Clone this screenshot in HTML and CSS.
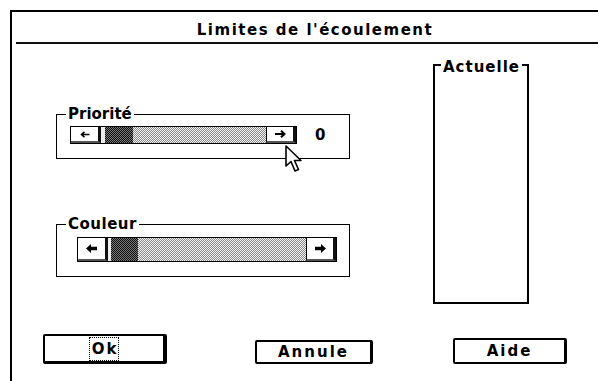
FILE: index.html
```html
<!DOCTYPE html>
<html lang="fr">

<head>
    <meta charset="UTF-8">
    <meta name="viewport" content="width=device-width, initial-scale=1.0">
    <title>Limites de l'écoulement</title>
    <link rel="stylesheet" href="styles.css">
</head>

<body>
    <div class="dialog">
        <div class="title">Limites de l'écoulement</div>

        <div class="main">
            <div class="left-col">
                <!-- Priorité -->
                <fieldset class="group group-prio">
                    <legend>Priorité</legend>
                    <div class="row">
                        <div class="scrollbar bar-small">
                            <span class="arrow-btn">
                                <svg width="10" height="7" viewBox="0 0 10 7">
                                    <path d="M1.5 3.5 H9.5 M4.5 0.8 L1.5 3.5 L4.5 6.2" fill="none" stroke="#000" stroke-width="1.6"/>
                                </svg>
                            </span>
                            <span class="thumb"></span>
                            <span class="track"></span>
                            <span class="arrow-btn arrow-right">
                                <svg width="11" height="8" viewBox="0 0 11 8">
                                    <path d="M0 4 H9.5 M6 0.8 L9.5 4 L6 7.2" fill="none" stroke="#000" stroke-width="2"/>
                                </svg>
                            </span>
                        </div>
                        <span class="value">0</span>
                    </div>
                    <svg class="cursor" width="20" height="28" viewBox="0 0 20 28">
                        <path d="M1 1 L1 21 L6 16.5 L10 26 L13.5 24.5 L9.5 15.5 L16 15.5 Z" fill="#fff" stroke="#000" stroke-width="1.6" stroke-linejoin="round"/>
                    </svg>
                </fieldset>

                <!-- Couleur -->
                <fieldset class="group group-coul">
                    <legend>Couleur</legend>
                    <div class="row">
                        <div class="scrollbar bar-large">
                            <span class="arrow-btn">
                                <svg width="11" height="9" viewBox="0 0 11 9">
                                    <polygon points="0,4.5 5,0 5,2.8 11,2.8 11,6.2 5,6.2 5,9" fill="#000"/>
                                </svg>
                            </span>
                            <span class="thumb"></span>
                            <span class="track"></span>
                            <span class="arrow-btn arrow-right">
                                <svg width="11" height="9" viewBox="0 0 11 9">
                                    <polygon points="11,4.5 6,0 6,2.8 0,2.8 0,6.2 6,6.2 6,9" fill="#000"/>
                                </svg>
                            </span>
                        </div>
                    </div>
                </fieldset>
            </div>

            <fieldset class="actuelle">
                <legend>Actuelle</legend>
            </fieldset>
        </div>

        <div class="buttons">
            <button class="btn btn-ok" type="button"><span class="focus">Ok</span></button>
            <button class="btn btn-annule" type="button">Annule</button>
            <button class="btn btn-aide" type="button">Aide</button>
        </div>
    </div>
</body>

</html>
```

FILE: styles.css
```css
body {
    margin: 0;
    background-color: #fff;
    font-family: 'DejaVu Sans', sans-serif;
    color: #000;
    overflow: hidden;
}

.dialog {
    margin: 10px 0 0 10px;
    width: 602px;
    height: 380px;
    border-top: 2px solid #000;
    border-left: 2px solid #000;
}

.title {
    margin-left: 4px;
    padding-top: 3px;
    height: 27px;
    line-height: 30px;
    border-bottom: 2px solid #111;
    text-align: center;
    font-weight: bold;
    font-size: 15px;
    letter-spacing: 1.5px;
}

.main {
    display: flex;
    align-items: flex-start;
    padding: 9px 0 0 44px;
}

.left-col {
    width: 294px;
    padding-top: 53px;
}

fieldset {
    margin: 0;
    padding: 0;
    min-width: 0;
    border: 1px solid #000;
}

legend {
    padding: 0 2px;
    margin-left: 9px;
    font-weight: bold;
    font-size: 15px;
    line-height: 17px;
    letter-spacing: 0.5px;
}

.group {
    position: relative;
}

.group-prio {
    padding: 3px 0 14px 13px;
}

.group-coul {
    margin-top: 57px;
    padding: 4px 0 14px 20px;
}

.group-prio legend {
    margin-left: -4px;
    letter-spacing: 0;
}

.group-coul legend {
    margin-left: -11px;
}

.row {
    display: flex;
    align-items: center;
}

.scrollbar {
    display: flex;
    box-sizing: border-box;
    border: 1px solid #000;
}

.bar-small {
    width: 227px;
    height: 18px;
}

.bar-large {
    width: 260px;
    height: 25px;
}

.arrow-btn {
    display: flex;
    align-items: center;
    justify-content: center;
    box-sizing: border-box;
    width: 30px;
    background-color: #fff;
    border-right: 3px solid #111;
    border-bottom: 2px solid #555;
}

.arrow-right {
    border-left: 1px solid #000;
}

.thumb {
    box-sizing: border-box;
    width: 32px;
    border-left: 4px solid #eee;
    background: repeating-conic-gradient(#111 0 25%, #777 0 50%) 0 0 / 2px 2px;
}

.bar-large .thumb {
    width: 30px;
    border-left-width: 3px;
}

.track {
    flex: 1;
    background: repeating-conic-gradient(#888 0 25%, #f4f4f4 0 50%) 0 0 / 2px 2px;
}

.value {
    margin-left: 18px;
    font-weight: bold;
    font-size: 15px;
}

.cursor {
    position: absolute;
    left: 228px;
    top: 22px;
}

.actuelle {
    margin-left: 83px;
    width: 96px;
    height: 251px;
    box-sizing: border-box;
    border: 2px solid #000;
}

.actuelle legend {
    margin-left: 6px;
    padding: 6px 2px 0;
    letter-spacing: 1px;
}

.buttons {
    display: flex;
    align-items: flex-end;
    margin-top: 30px;
    padding-left: 31px;
}

.btn {
    box-sizing: border-box;
    background-color: #fff;
    font-family: 'DejaVu Sans', sans-serif;
    font-weight: bold;
    font-size: 15px;
    letter-spacing: 2px;
    color: #000;
    padding: 0;
    border: 2px solid #000;
    border-right-width: 3px;
    border-radius: 2px;
}

.btn-ok {
    width: 124px;
    height: 30px;
    border-width: 2px 4px 3px 2px;
}

.btn-ok .focus {
    display: inline-block;
    padding: 1px 0 1px 2px;
    line-height: 20px;
    outline: 1px dotted #000;
}

.btn-annule {
    margin-left: 88px;
    width: 118px;
    height: 24px;
}

.btn-aide {
    margin-left: 80px;
    width: 114px;
    height: 26px;
}
```
